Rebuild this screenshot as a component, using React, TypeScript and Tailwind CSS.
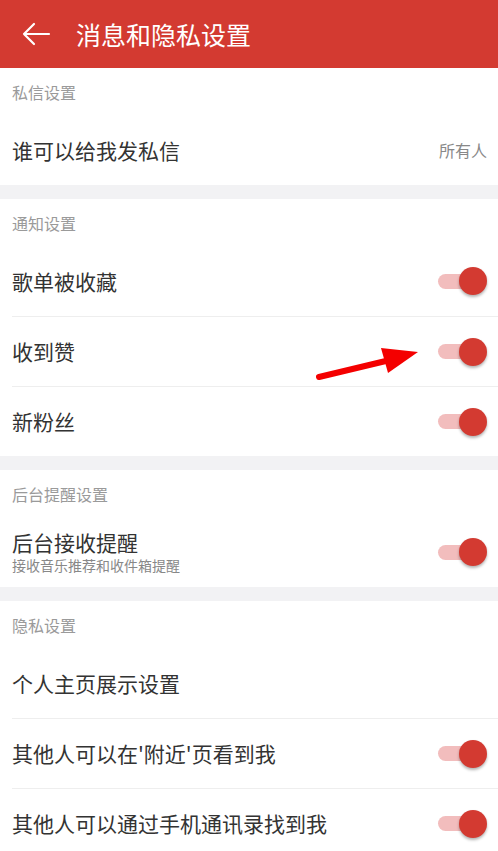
import React from 'react';

type Row = {
  title: string;
  subtitle?: string;
  value?: string;
  toggle?: boolean;
};

type Section = {
  label: string;
  rows: Row[];
};

const sections: Section[] = [
  {
    label: '私信设置',
    rows: [{ title: '谁可以给我发私信', value: '所有人' }],
  },
  {
    label: '通知设置',
    rows: [
      { title: '歌单被收藏', toggle: true },
      { title: '收到赞', toggle: true },
      { title: '新粉丝', toggle: true },
    ],
  },
  {
    label: '后台提醒设置',
    rows: [{ title: '后台接收提醒', subtitle: '接收音乐推荐和收件箱提醒', toggle: true }],
  },
  {
    label: '隐私设置',
    rows: [
      { title: '个人主页展示设置' },
      { title: "其他人可以在'附近'页看到我", toggle: true },
      { title: '其他人可以通过手机通讯录找到我', toggle: true },
    ],
  },
];

function Toggle() {
  return (
    <div className="relative w-[50px] h-[28px] flex items-center">
      <div className="ml-[1px] w-[42px] h-[15px] rounded-full bg-[#f2bdbd]" />
      <div className="absolute right-0 top-0 w-[28px] h-[28px] rounded-full bg-[#d33a31] shadow-[0_2px_3px_rgba(0,0,0,0.3)]" />
    </div>
  );
}

export default function App() {
  return (
    <div
      className="relative w-[498px] h-[851px] overflow-hidden bg-white"
      style={{ fontFamily: '"Noto Sans CJK SC", "Noto Sans", sans-serif' }}
    >
      <div className="h-[68px] bg-[#d33a31] flex items-center">
        <svg className="ml-[21px]" width="30" height="24" viewBox="0 0 30 24" fill="none">
          <path d="M28 12H3M13 2L3 12l10 10" stroke="white" strokeWidth="2.2" strokeLinecap="round" strokeLinejoin="round" />
        </svg>
        <h1 className="ml-[25px] text-[25px] text-white leading-none">消息和隐私设置</h1>
      </div>

      {sections.map((s, si) => (
        <div key={s.label}>
          {si > 0 && <div className="h-[14px] bg-[#f2f2f4]" />}
          <div className="h-[47px] flex items-center px-3 text-[16px] text-[#9a9a9a]">{s.label}</div>
          <div className="ml-3">
            {s.rows.map((r, ri) => (
              <div
                key={r.title}
                className={`h-[70px] flex items-center pr-[11px] ${ri > 0 ? 'border-t border-[#eeeeee]' : ''}`}
              >
                <div className="flex-1 min-w-0">
                  <p className="text-[21px] text-[#333] leading-tight">{r.title}</p>
                  {r.subtitle && <p className="text-[14px] text-[#888] mt-[2px] leading-tight">{r.subtitle}</p>}
                </div>
                {r.value && <span className="text-[16px] text-[#888]">{r.value}</span>}
                {r.toggle && <Toggle />}
              </div>
            ))}
          </div>
        </div>
      ))}

      <svg className="absolute left-0 top-0 pointer-events-none" width="498" height="851" viewBox="0 0 498 851">
        <path d="M319 377L390 360" stroke="#f40000" strokeWidth="6" strokeLinecap="round" />
        <path d="M418 352L381 348L388 373Z" fill="#f40000" />
      </svg>
    </div>
  );
}
